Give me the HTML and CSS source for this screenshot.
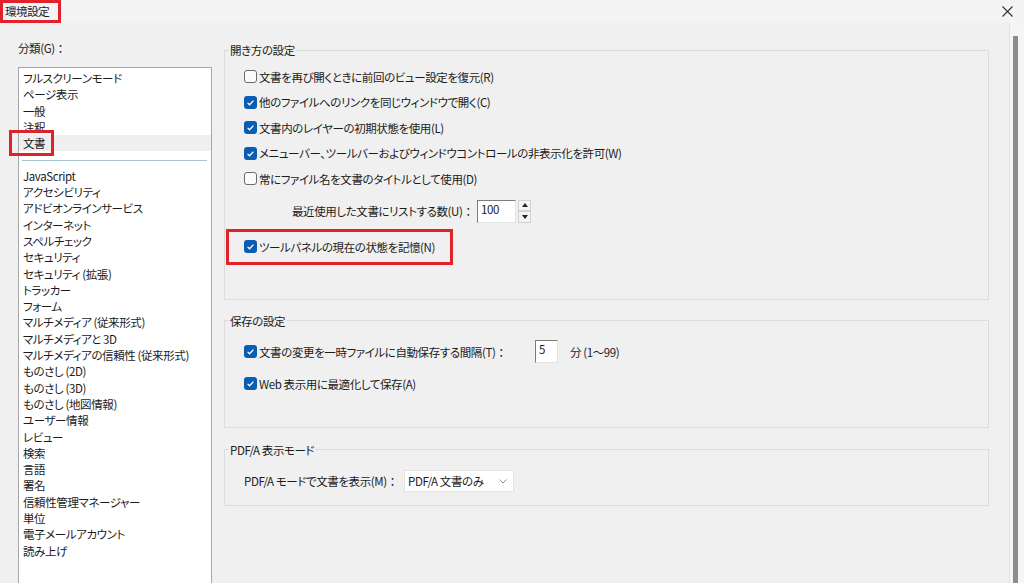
FILE: index.html
```html
<!DOCTYPE html>
<html lang="ja">
<head>
  <meta charset="UTF-8" />
  <title>環境設定</title>
  <link rel="stylesheet" href="styles.css">
</head>
<body>

  <!-- title bar -->
  <div class="titlebar">
    <div class="title-mark">環境設定</div>
    <svg class="close" width="11" height="11" viewBox="0 0 11 11">
      <path d="M0.5 0.5 L10.5 10.5 M10.5 0.5 L0.5 10.5" stroke="#333" stroke-width="1.1" fill="none"/>
    </svg>
  </div>

  <div class="main">
    <!-- left: categories -->
    <div class="side">
      <div class="side-label">分類(G)<span class="colon">：</span></div>
      <ul class="list">
        <li>フルスクリーンモード</li>
        <li>ページ表示</li>
        <li>一般</li>
        <li>注釈</li>
        <li class="selected"><span class="mark-doc"></span>文書</li>
        <li class="sep"><span></span></li>
        <li>JavaScript</li>
        <li>アクセシビリティ</li>
        <li>アドビオンラインサービス</li>
        <li>インターネット</li>
        <li>スペルチェック</li>
        <li>セキュリティ</li>
        <li>セキュリティ (拡張)</li>
        <li>トラッカー</li>
        <li>フォーム</li>
        <li>マルチメディア (従来形式)</li>
        <li>マルチメディアと 3D</li>
        <li>マルチメディアの信頼性 (従来形式)</li>
        <li>ものさし (2D)</li>
        <li>ものさし (3D)</li>
        <li>ものさし (地図情報)</li>
        <li>ユーザー情報</li>
        <li>レビュー</li>
        <li>検索</li>
        <li>言語</li>
        <li>署名</li>
        <li>信頼性管理マネージャー</li>
        <li>単位</li>
        <li>電子メールアカウント</li>
        <li>読み上げ</li>
      </ul>
    </div>

    <!-- right: settings -->
    <div class="content">
      <fieldset class="group open">
        <legend>開き方の設定</legend>
        <div class="row"><span class="cb"></span>文書を再び開くときに前回のビュー設定を復元(R)</div>
        <div class="row"><span class="cb on"><svg width="13" height="13" viewBox="0 0 13 13"><polyline points="3.6,6.9 5.6,8.8 9.4,4.6" fill="none" stroke="#fff" stroke-width="1.3"/></svg></span>他のファイルへのリンクを同じウィンドウで開く(C)</div>
        <div class="row"><span class="cb on"><svg width="13" height="13" viewBox="0 0 13 13"><polyline points="3.6,6.9 5.6,8.8 9.4,4.6" fill="none" stroke="#fff" stroke-width="1.3"/></svg></span>文書内のレイヤーの初期状態を使用(L)</div>
        <div class="row"><span class="cb on"><svg width="13" height="13" viewBox="0 0 13 13"><polyline points="3.6,6.9 5.6,8.8 9.4,4.6" fill="none" stroke="#fff" stroke-width="1.3"/></svg></span>メニューバー、ツールバーおよびウィンドウコントロールの非表示化を許可(W)</div>
        <div class="row"><span class="cb"></span>常にファイル名を文書のタイトルとして使用(D)</div>
        <div class="row recent">
          <span class="recent-label">最近使用した文書にリストする数(U)<span class="colon">：</span></span>
          <span class="field num">100</span>
          <span class="spin">
            <span class="spin-btn"><span class="tri up"></span></span>
            <span class="spin-btn"><span class="tri down"></span></span>
          </span>
        </div>
        <div class="mark-row">
          <span class="cb on"><svg width="13" height="13" viewBox="0 0 13 13"><polyline points="3.6,6.9 5.6,8.8 9.4,4.6" fill="none" stroke="#fff" stroke-width="1.3"/></svg></span>ツールパネルの現在の状態を記憶(N)
        </div>
      </fieldset>

      <fieldset class="group save">
        <legend>保存の設定</legend>
        <div class="row tall">
          <span class="cb on"><svg width="13" height="13" viewBox="0 0 13 13"><polyline points="3.6,6.9 5.6,8.8 9.4,4.6" fill="none" stroke="#fff" stroke-width="1.3"/></svg></span>
          <span class="save-label">文書の変更を一時ファイルに自動保存する間隔(T)<span class="colon">：</span></span>
          <span class="field min">5</span>
          <span class="unit">分 (1〜99)</span>
        </div>
        <div class="row tall second">
          <span class="cb on"><svg width="13" height="13" viewBox="0 0 13 13"><polyline points="3.6,6.9 5.6,8.8 9.4,4.6" fill="none" stroke="#fff" stroke-width="1.3"/></svg></span>Web 表示用に最適化して保存(A)
        </div>
      </fieldset>

      <fieldset class="group pdfa">
        <legend>PDF/A 表示モード</legend>
        <div class="row select-row">
          <span class="pdfa-label">PDF/A モードで文書を表示(M)<span class="colon">：</span></span>
          <span class="select">PDF/A 文書のみ
            <svg class="chev" width="8" height="5" viewBox="0 0 8 5"><polyline points="0.5,0.5 4,4 7.5,0.5" fill="none" stroke="#888" stroke-width="1"/></svg>
          </span>
        </div>
      </fieldset>
    </div>

    <div class="edge"><div class="edge-bar"></div></div>
  </div>

</body>
</html>
```

FILE: styles.css
```css
/* page */
html, body {
  margin: 0;
  padding: 0;
  height: 100%;
  overflow: hidden;
  background: #f0f0f0;
  color: #1b1b1b;
  font-family: "Noto Sans CJK JP", "Noto Sans", sans-serif;
  font-size: 11.5px;
  letter-spacing: -0.4px;
  font-feature-settings: "palt";
}

/* full width colon, not squeezed */
.colon {
  font-feature-settings: normal;
  letter-spacing: 0;
}

/* title bar */
.titlebar {
  height: 23px;
  display: flex;
  align-items: center;
  justify-content: space-between;
  background: #f4f4f4;
}
.title-mark {
  box-sizing: border-box;
  height: 23px;
  width: 61px;
  border: 3px solid #e2222b;
  padding-left: 2px;
  line-height: 16px;
}
.close {
  margin-right: 11px;
}

.main {
  display: flex;
  height: 560px;
}

/* left column */
.side {
  width: 194px;
  padding-left: 18px;
}
.side-label {
  margin-top: 17px;
  line-height: 16px;
}
.list {
  list-style: none;
  margin: 11px 0 0;
  padding: 2px 0 0;
  height: 540px;
  box-sizing: border-box;
  background: #fff;
  border: 1px solid #a7a7a7;
}
.list li {
  height: 16.3px;
  line-height: 16.3px;
  padding-left: 4px;
  white-space: nowrap;
}
.list li.selected {
  position: relative;
  background: #efefef;
}
.mark-doc {
  position: absolute;
  left: -10px;
  top: -5px;
  width: 45px;
  height: 26px;
  box-sizing: border-box;
  border: 3px solid #e2222b;
}
.list li.sep {
  display: flex;
  align-items: center;
  padding: 0 4px 0 3px;
}
.list li.sep span {
  flex: 1;
  height: 1px;
  background: #a9c3d6;
  margin-top: 2px;
}

/* right column */
.content {
  margin-left: 12px;
  width: 765px;
}
.group {
  margin: 0;
  padding: 0;
  min-width: 0;
  border: 1px solid #dcdcdc;
}
.group legend {
  margin-left: 4px;
  padding: 0 1px;
  line-height: 16px;
}
.open {
  margin-top: 19px;
  padding-top: 6px;
  padding-bottom: 34px;
}
.save {
  margin-top: 13px;
  padding-top: 11px;
  padding-bottom: 31px;
}
.pdfa {
  margin-top: 14px;
  padding-top: 12px;
  padding-bottom: 13px;
}

.row {
  height: 25.5px;
  display: flex;
  align-items: center;
  padding-left: 19px;
  white-space: nowrap;
}
.row.tall { height: 24px; }
.row.second { margin-top: 8px; }

/* checkboxes */
.cb {
  box-sizing: border-box;
  width: 13px;
  height: 13px;
  margin-right: 2px;
  border-radius: 3px;
  border: 1px solid #6a6a6a;
  background: #fbfbfb;
  flex-shrink: 0;
}
.cb.on {
  border: none;
  background: #0a5db5;
}
.cb svg { display: block; }

/* spinner row */
.recent {
  margin-top: 8px;
  height: 23px;
  padding-left: 67px;
}
.recent-label {
  box-sizing: border-box;
  width: 185px;
  padding-right: 6px;
  text-align: right;
}
.field {
  box-sizing: border-box;
  height: 23px;
  background: #fff;
  border-top: 1px solid #7c7c7c;
  border-left: 1px solid #7c7c7c;
  border-right: 1px solid #e3e3e3;
  border-bottom: 1px solid #e3e3e3;
  padding: 1px 0 0 3px;
  line-height: 15px;
  align-self: flex-start;
}
.field.num { width: 39px; }
.field.min { width: 23px; }
.spin {
  margin-left: 2px;
  display: flex;
  flex-direction: column;
  align-self: flex-start;
}
.spin-btn {
  box-sizing: border-box;
  width: 13px;
  height: 11.5px;
  border: 1px solid #d2d2d2;
  background: #f3f3f3;
  display: flex;
  align-items: center;
  justify-content: center;
}
.tri {
  width: 0;
  height: 0;
  border-left: 3px solid transparent;
  border-right: 3px solid transparent;
}
.tri.up { border-bottom: 4px solid #222; }
.tri.down { border-top: 4px solid #222; }

/* highlighted row */
.mark-row {
  box-sizing: border-box;
  margin: 6px 0 0 1px;
  width: 227px;
  height: 36px;
  border: 3px solid #e2222b;
  padding-left: 15px;
  display: flex;
  align-items: center;
  white-space: nowrap;
}

/* save group */
.save-label { width: 276px; }
.unit { margin-left: 12px; }

/* pdf/a group */
.select-row { height: 22px; padding-left: 19px; }
.pdfa-label { width: 160px; }
.select {
  box-sizing: border-box;
  width: 110px;
  height: 22px;
  background: #fff;
  border: 1px solid #e4e4e4;
  padding-left: 3px;
  display: flex;
  align-items: center;
  position: relative;
}
.chev {
  position: absolute;
  right: 6px;
  top: 8px;
}

/* right edge strip */
.edge {
  margin-left: auto;
  width: 14px;
  background: #f5f5f5;
  border-left: 1px solid #e3e3e3;
}
.edge-bar {
  margin: 13px 0 0 3px;
  width: 5px;
  height: 560px;
  background: #8c8c8c;
}
```
